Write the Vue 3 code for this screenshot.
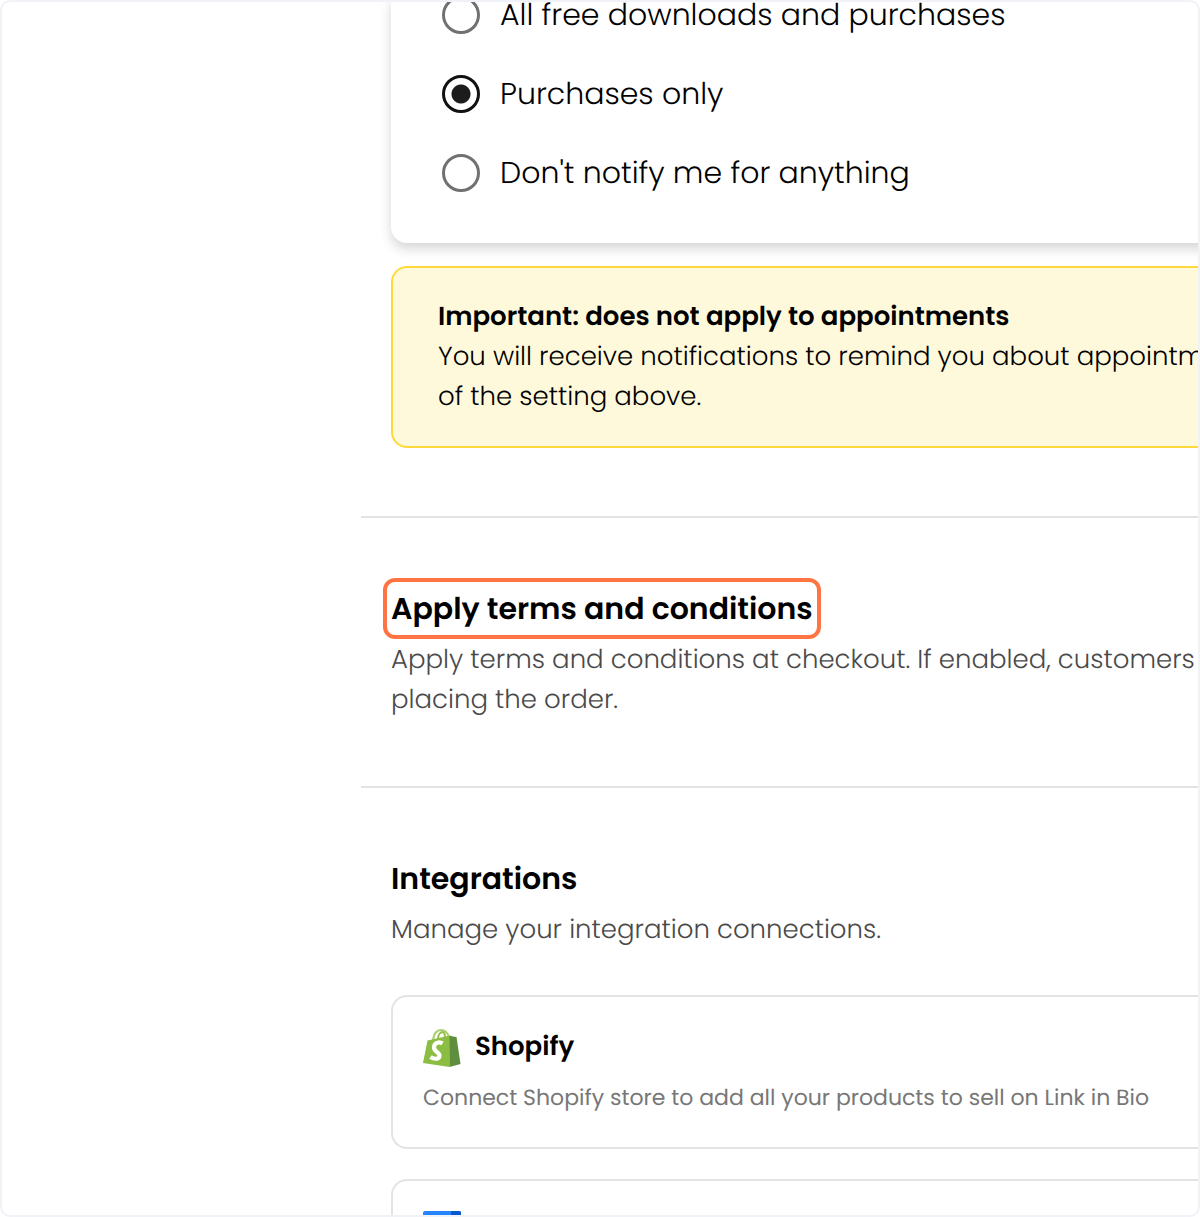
<script setup>
import { ref } from 'vue'

const notify = ref('purchases')
const options = [
  { value: 'all', label: 'All free downloads and purchases' },
  { value: 'purchases', label: 'Purchases only' },
  { value: 'none', label: "Don't notify me for anything" },
]
</script>

<template>
  <div class="frame">
    <main class="settings">
      <section class="notifications">
        <div class="options">
          <label v-for="o in options" :key="o.value" class="option">
            <input v-model="notify" type="radio" name="notify" :value="o.value" />
            <span>{{ o.label }}</span>
          </label>
        </div>
        <div class="notice">
          <strong>Important: does not apply to appointments</strong>
          <p>You will receive notifications to remind you about appointments<br />of the setting above.</p>
        </div>
      </section>

      <section class="block">
        <h2><span class="highlighted">Apply terms and conditions</span></h2>
        <p class="lead">Apply terms and conditions at checkout. If enabled, customers<br />placing the order.</p>
      </section>

      <section class="block">
        <h2>Integrations</h2>
        <p class="lead">Manage your integration connections.</p>
        <div class="cards">
          <article class="card">
            <header>
              <svg class="logo" viewBox="0 0 38 40" aria-hidden="true">
                <path d="M10 13C11 6 14 3 18 3C23 3 25 7 26 10" fill="none" stroke="#a9cf70" stroke-width="2.200" />
                <path d="M15 12C15 8 17 5 20 5C22 6 22 8 22 11" fill="none" stroke="#95bf47" stroke-width="2" />
                <path d="M4.500 13.500L27 8.500L26.500 40L0 36Z" fill="#8abd42" />
                <path d="M26.500 8.500L30 9.500L33.500 10L37.500 37L26.500 40Z" fill="#5e8e3e" />
                <path d="M19.500 16.500C16 14 11 16 11 20.500C11 25 17 25 16.500 29C16 32.500 11 32.500 7.500 30" fill="none" stroke="#fff" stroke-width="4.200" />
              </svg>
              <h3>Shopify</h3>
            </header>
            <p>Connect Shopify store to add all your products to sell on Link in Bio</p>
          </article>
          <article class="card">
            <header>
              <svg class="logo" viewBox="0 0 38 40" aria-hidden="true">
                <rect width="38" height="38" rx="2" fill="#2684fc" />
                <path d="M28 0H36A2 2 0 0 1 38 2V10H28Z" fill="#0757cf" />
                <path d="M9 10H28V29H9Z" fill="#fff" />
              </svg>
            </header>
          </article>
        </div>
      </section>
    </main>
  </div>
</template>

<style>
body {
  margin: 0;
  background: #fff;
}
</style>

<style scoped>
* {
  box-sizing: border-box;
}
.frame {
  height: 100vh;
  overflow: hidden;
  border: 2px solid #f1f1f8;
  border-radius: 10px;
  padding-left: 359px;
  background: #fff;
  color: #000;
  font-family: Poppins, Inter, sans-serif;
  font-weight: 300;
  text-rendering: geometricPrecision;
  white-space: nowrap;
}
h2, h3, p {
  margin: 0;
}
.notifications {
  padding: 0 0 68px 30px;
}
.options {
  display: flex;
  flex-direction: column;
  gap: 41px;
  margin: -6px -16px 0 0;
  padding: 0 51px 51px;
  border-radius: 0 0 0 16px;
  box-shadow: 0 6px 12px rgba(0, 0, 0, 0.16);
}
.option {
  display: flex;
  align-items: center;
  gap: 20px;
  height: 38px;
  font-size: 30px;
}
.option input {
  appearance: none;
  flex: none;
  width: 38px;
  height: 38px;
  margin: 0;
  padding: 7px;
  border: 3px solid #717171;
  border-radius: 50%;
}
.option input:checked {
  border-color: #111;
  background: radial-gradient(circle, #1c1c1c 9px, transparent 10px);
}
.notice {
  margin-top: 23px;
  padding: 29px 45px;
  border: 2px solid #ffd93b;
  border-right: 0;
  border-radius: 16px 0 0 16px;
  background: #fff9dc;
  font-size: 26px;
  line-height: 40px;
}
.notice strong {
  display: block;
  font-weight: 600;
}
.block {
  padding: 71px 0 66px 30px;
  border-top: 2px solid #e3e3e3;
}
h2 {
  font-size: 30px;
  font-weight: 600;
  line-height: 40px;
}
.highlighted {
  position: relative;
}
.highlighted::after {
  content: '';
  position: absolute;
  inset: -9px -8px;
  border: 4px solid #ff7442;
  border-radius: 12px;
}
.lead {
  margin-top: 11px;
  color: #4a4a4a;
  font-size: 26px;
  line-height: 40px;
}
.cards {
  display: flex;
  flex-direction: column;
  gap: 30px;
  margin-top: 45px;
}
.card {
  padding: 30px 30px 33px;
  border: 2px solid #e3e3e3;
  border-right: 0;
  border-radius: 16px 0 0 16px;
}
.card header {
  display: flex;
  align-items: center;
  gap: 14px;
}
.logo {
  width: 38px;
  height: 40px;
}
h3 {
  font-size: 26px;
  font-weight: 600;
  line-height: 40px;
}
.card p {
  margin-top: 15px;
  color: #777;
  font-size: 22px;
  font-weight: 400;
  line-height: 32px;
}
</style>
